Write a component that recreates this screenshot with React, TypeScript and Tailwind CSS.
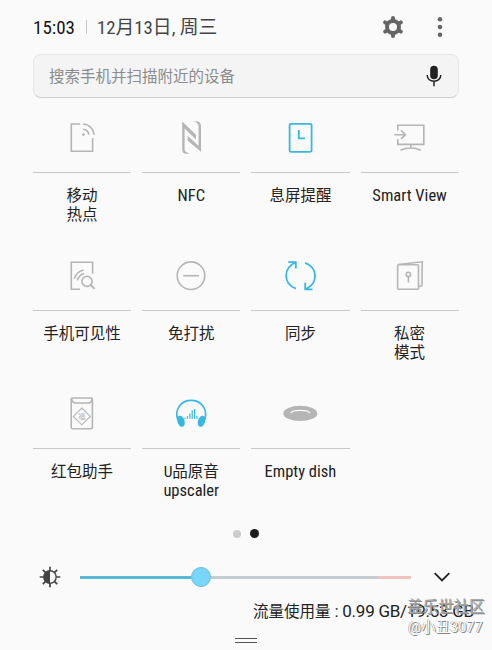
import type { ReactNode } from 'react';

interface Tile {
  id: string;
  lines: string[];
  icon: ReactNode;
  active?: boolean;
}

const tiles: Tile[] = [
  {
    id: 'hotspot',
    lines: ['移动', '热点'],
    icon: (
      <g>
        <path d="M18.3 6H9.3V33.3H30.6V20" />
        <path d="M21 6A11.4 11.4 0 0 1 32 16.8M21.2 11.2A6.2 6.2 0 0 1 26.8 16.8" />
        <circle cx="21.4" cy="16.6" r="1.4" fill="currentColor" stroke="none" />
      </g>
    ),
  },
  {
    id: 'nfc',
    lines: ['NFC'],
    icon: (
      <g fill="currentColor" stroke="none">
        <path d="M11.2 3.4L25 16.8V21.4L13.6 10.4V31.5Q14 34.6 18.4 35.4Q11.2 37 11.2 31.5Z" />
        <path d="M30 33.8L16.6 22.4V17.8L27.6 28V8Q27 4.4 22.4 3.5Q30 2.2 30 8.5Z" />
      </g>
    ),
  },
  {
    id: 'always-on',
    lines: ['息屏提醒'],
    active: true,
    icon: (
      <g strokeWidth="1.8">
        <rect x="9.6" y="5.8" width="22" height="28" rx="1.5" />
        <path d="M18.8 12V20.4H25" />
      </g>
    ),
  },
  {
    id: 'smart-view',
    lines: ['Smart View'],
    icon: (
      <g>
        <path d="M7.8 12.5V7.2H33.8V26.4H7.8V21M4.4 16.7H15.4M11 12.4L15.5 16.7L11 21" />
        <path d="M20.8 26.4V30M10.5 32.3Q20.8 27.8 31 32.3" />
      </g>
    ),
  },
  {
    id: 'visibility',
    lines: ['手机可见性'],
    icon: (
      <g>
        <path d="M30.6 17.8V6.3H9.3V33.2H18" />
        <path d="M12.4 22.8Q14.4 15.5 21.6 14M15.4 24.4Q17 18.9 22 17.4" />
        <circle cx="25" cy="25.3" r="5.1" />
        <path d="M28.8 29L32.6 32.8" strokeWidth="1.9" />
      </g>
    ),
  },
  {
    id: 'dnd',
    lines: ['免打扰'],
    icon: (
      <g>
        <circle cx="20" cy="19.7" r="13.8" />
        <path d="M12.2 19.7H28" />
      </g>
    ),
  },
  {
    id: 'sync',
    lines: ['同步'],
    active: true,
    icon: (
      <g strokeWidth="1.8">
        <path d="M15.9 32.6C3 27.6 3 12 15.3 6.5M8.3 6.1H15.8V12.6" />
        <path d="M25.2 6.8C38.2 11.8 38.2 27.6 25.8 33M32.5 33.4H25.2V26.8" />
      </g>
    ),
  },
  {
    id: 'private',
    lines: ['私密', '模式'],
    icon: (
      <g>
        <rect x="7.6" y="8.8" width="20.9" height="24.5" rx="1" />
        <path d="M8 8.5L32.3 5.8L31.9 29.8L28.8 30.6" />
        <circle cx="18.4" cy="18.5" r="2.2" />
        <path d="M18.4 20.8V26.5" />
      </g>
    ),
  },
  {
    id: 'red-packet',
    lines: ['红包助手'],
    icon: (
      <g>
        <rect x="9.2" y="4" width="21.2" height="30.7" rx="1.2" />
        <path d="M9.6 4.6Q10 8.6 13 9H26.6Q29.8 8.6 30.1 4.6" />
        <path d="M19.8 14L28.3 22.4L19.8 30.8L11.3 22.4Z" strokeWidth="1.1" />
        <text x="19.8" y="25" fontSize="7" textAnchor="middle" fill="currentColor" stroke="none">福</text>
      </g>
    ),
  },
  {
    id: 'upscaler',
    lines: ['U品原音', 'upscaler'],
    active: true,
    icon: (
      <g>
        <path d="M6.6 25.5C3.2 13.5 11.5 6.4 20.2 6.4S37.2 13.5 33.8 25.5" />
        <ellipse cx="10" cy="27.3" rx="3.6" ry="5.7" transform="rotate(-17 10 27.3)" fill="currentColor" stroke="none" />
        <ellipse cx="30.5" cy="27.3" rx="3.6" ry="5.7" transform="rotate(17 30.5 27.3)" fill="currentColor" stroke="none" />
        <path d="M13.9 23.5V24.8M16.4 22V24.8M18.9 19.5V24.8M21.2 16.2V24.8M23.6 15V24.8M25.9 22V24.8" strokeWidth="1.2" />
      </g>
    ),
  },
  {
    id: 'dish',
    lines: ['Empty dish'],
    icon: (
      <g>
        <ellipse cx="20.3" cy="19.4" rx="17" ry="7.6" fill="currentColor" stroke="none" />
        <path d="M10.8 19.2C12 15.3 28.7 15.3 29.9 19.2" stroke="#fafafa" strokeWidth="1.3" />
      </g>
    ),
  },
];

const isLatin = (text: string) => /^[A-Za-z ]+$/.test(text);

function QuickTile({ tile }: { tile: Tile }) {
  return (
    <div className="h-[138px] text-center">
      <div className="flex h-[69px] justify-center border-b border-[#c8c8c8] pt-[14px]">
        <svg
          viewBox="0 0 40 40"
          className={`h-10 w-10 ${tile.active ? 'text-[#37b8e0]' : 'text-[#b5b5b5]'}`}
          fill="none"
          stroke="currentColor"
          strokeWidth="1.6"
        >
          {tile.icon}
        </svg>
      </div>
      <div className="pt-[14px] text-[#222]">
        {tile.lines.map((line) => (
          <div
            key={line}
            className={`h-[19px] whitespace-nowrap ${isLatin(line) ? 'text-[16.5px] leading-[18px]' : 'text-[15.5px] leading-[19px]'}`}
          >
            {line}
          </div>
        ))}
      </div>
    </div>
  );
}

function Header() {
  return (
    <div className="flex h-[54px] items-center pr-[49px] pl-[33px]">
      <span className="w-[42px] pt-[3px] text-[19px] text-[#151515]">15:03</span>
      <span className="ml-[11px] h-[14px] w-px bg-[#c4c4c4]" />
      <span className="ml-[10px] pt-[3px] text-[18.8px] whitespace-nowrap text-[#444]">12月13日, 周三</span>
      <svg viewBox="0 0 24 24" className="ml-auto h-6 w-6 text-[#666]" fill="none" stroke="currentColor">
        <circle cx="12" cy="12" r="6" strokeWidth="4" />
        <path
          d="M12 2.9V5M12 19V21.1M4.1 7.4L5.8 8.4M18.2 15.6L19.9 16.6M4.1 16.6L5.8 15.6M18.2 8.4L19.9 7.4"
          strokeWidth="4"
          strokeLinecap="round"
        />
      </svg>
      <svg viewBox="0 0 6 22" className="ml-[32px] h-[22px] w-1.5 fill-[#666]">
        <circle cx="3" cy="3.2" r="2.3" />
        <circle cx="3" cy="11" r="2.3" />
        <circle cx="3" cy="18.8" r="2.3" />
      </svg>
    </div>
  );
}

function SearchBar() {
  return (
    <div className="mx-[33px] flex h-[44px] items-center rounded-lg border border-[#e6e6e6] border-b-[#cfcfcf] bg-[#f4f4f4] pr-[15px] pl-[15px]">
      <span className="pt-[3px] text-[15.5px] text-[#8c8c8c]">搜索手机并扫描附近的设备</span>
      <svg viewBox="0 0 18 24" className="ml-auto h-6 w-[18px] text-[#222]" fill="none" stroke="currentColor">
        <rect x="5.2" y="1.8" width="7.6" height="13.4" rx="3.8" fill="currentColor" stroke="none" />
        <path d="M2.2 11C2.2 19.2 15.8 19.2 15.8 11M9 17.3V22.2" strokeWidth="1.5" />
      </svg>
    </div>
  );
}

function BrightnessRow() {
  return (
    <div className="mt-[28px] flex h-[22px] items-center pr-[41px] pl-[39px]">
      <svg viewBox="0 0 22 22" className="h-[22px] w-[22px] text-[#444]" fill="none" stroke="currentColor">
        <circle cx="11" cy="11" r="6.2" strokeWidth="1.4" />
        <path d="M11 4.5A6.5 6.5 0 0 0 11 17.5Z" fill="currentColor" stroke="none" />
        <path
          d="M11 .7V4.5M11 17.5V21.3M.7 11H4.5M17.5 11H21.3M3.8 3.8L6.4 6.4M15.6 15.6L18.2 18.2M3.8 18.2L6.4 15.6M15.6 6.4L18.2 3.8"
          strokeWidth="1.7"
        />
      </svg>
      <div className="ml-[19px] flex w-[331px] items-center">
        <div className="h-[3px] w-[111px] bg-[#59b9d9]" />
        <div className="h-5 w-5 rounded-full border border-[#62bfdf] bg-[#78d6fa]" />
        <div className="h-[3px] w-[167px] bg-[#c3ccd1]" />
        <div className="h-[3px] w-[33px] bg-[#f0c2c0]" />
      </div>
      <svg viewBox="0 0 18 12" className="ml-auto h-3 w-[18px]" fill="none" stroke="#222" strokeWidth="1.8">
        <path d="M1.7 2.2L9 9.4L16.3 2.2" />
      </svg>
    </div>
  );
}

export default function App() {
  return (
    <div className="relative h-[650px] w-[492px] overflow-hidden bg-[#fafafa] font-['Roboto','Noto_Sans_CJK_SC',sans-serif] [font-stretch:75%]">
      <Header />
      <SearchBar />
      <div className="mr-[33.3px] ml-[33px] mt-[6px] grid grid-cols-4 gap-x-[11px]">
        {tiles.map((tile) => (
          <QuickTile key={tile.id} tile={tile} />
        ))}
      </div>
      <div className="mt-[11px] flex h-[9px] items-center pl-[233px]">
        <span className="h-2 w-2 rounded-full bg-[#cdcdcd]" />
        <span className="ml-[9px] h-[9px] w-[9px] rounded-full bg-[#1c1c1c]" />
      </div>
      <BrightnessRow />
      <div className="mt-[13px] h-5 pl-[253px] text-[15.5px] leading-[20px] whitespace-nowrap text-[#222]">
        流量使用量
        <span className="text-[17px] tracking-[-0.25px] [font-stretch:100%]"> : 0.99 GB/19.53 GB</span>
      </div>
      <div className="mt-[17px] ml-[235px] h-[5px] w-[22px] border-y-[1.5px] border-[#555]" />
      <div className="absolute top-[597px] left-[407px] text-[15.5px] leading-5 whitespace-nowrap text-[#a8a8a8] [text-shadow:1px_1px_0_#888]">
        <div>盖乐世社区</div>
        <div className="pt-px pl-[1px] text-[14.5px] text-[#fafafa] [font-stretch:100%] [text-shadow:1px_1px_0_#888,-0.5px_-0.5px_0_#999]">
          @小丑3077
        </div>
      </div>
    </div>
  );
}
